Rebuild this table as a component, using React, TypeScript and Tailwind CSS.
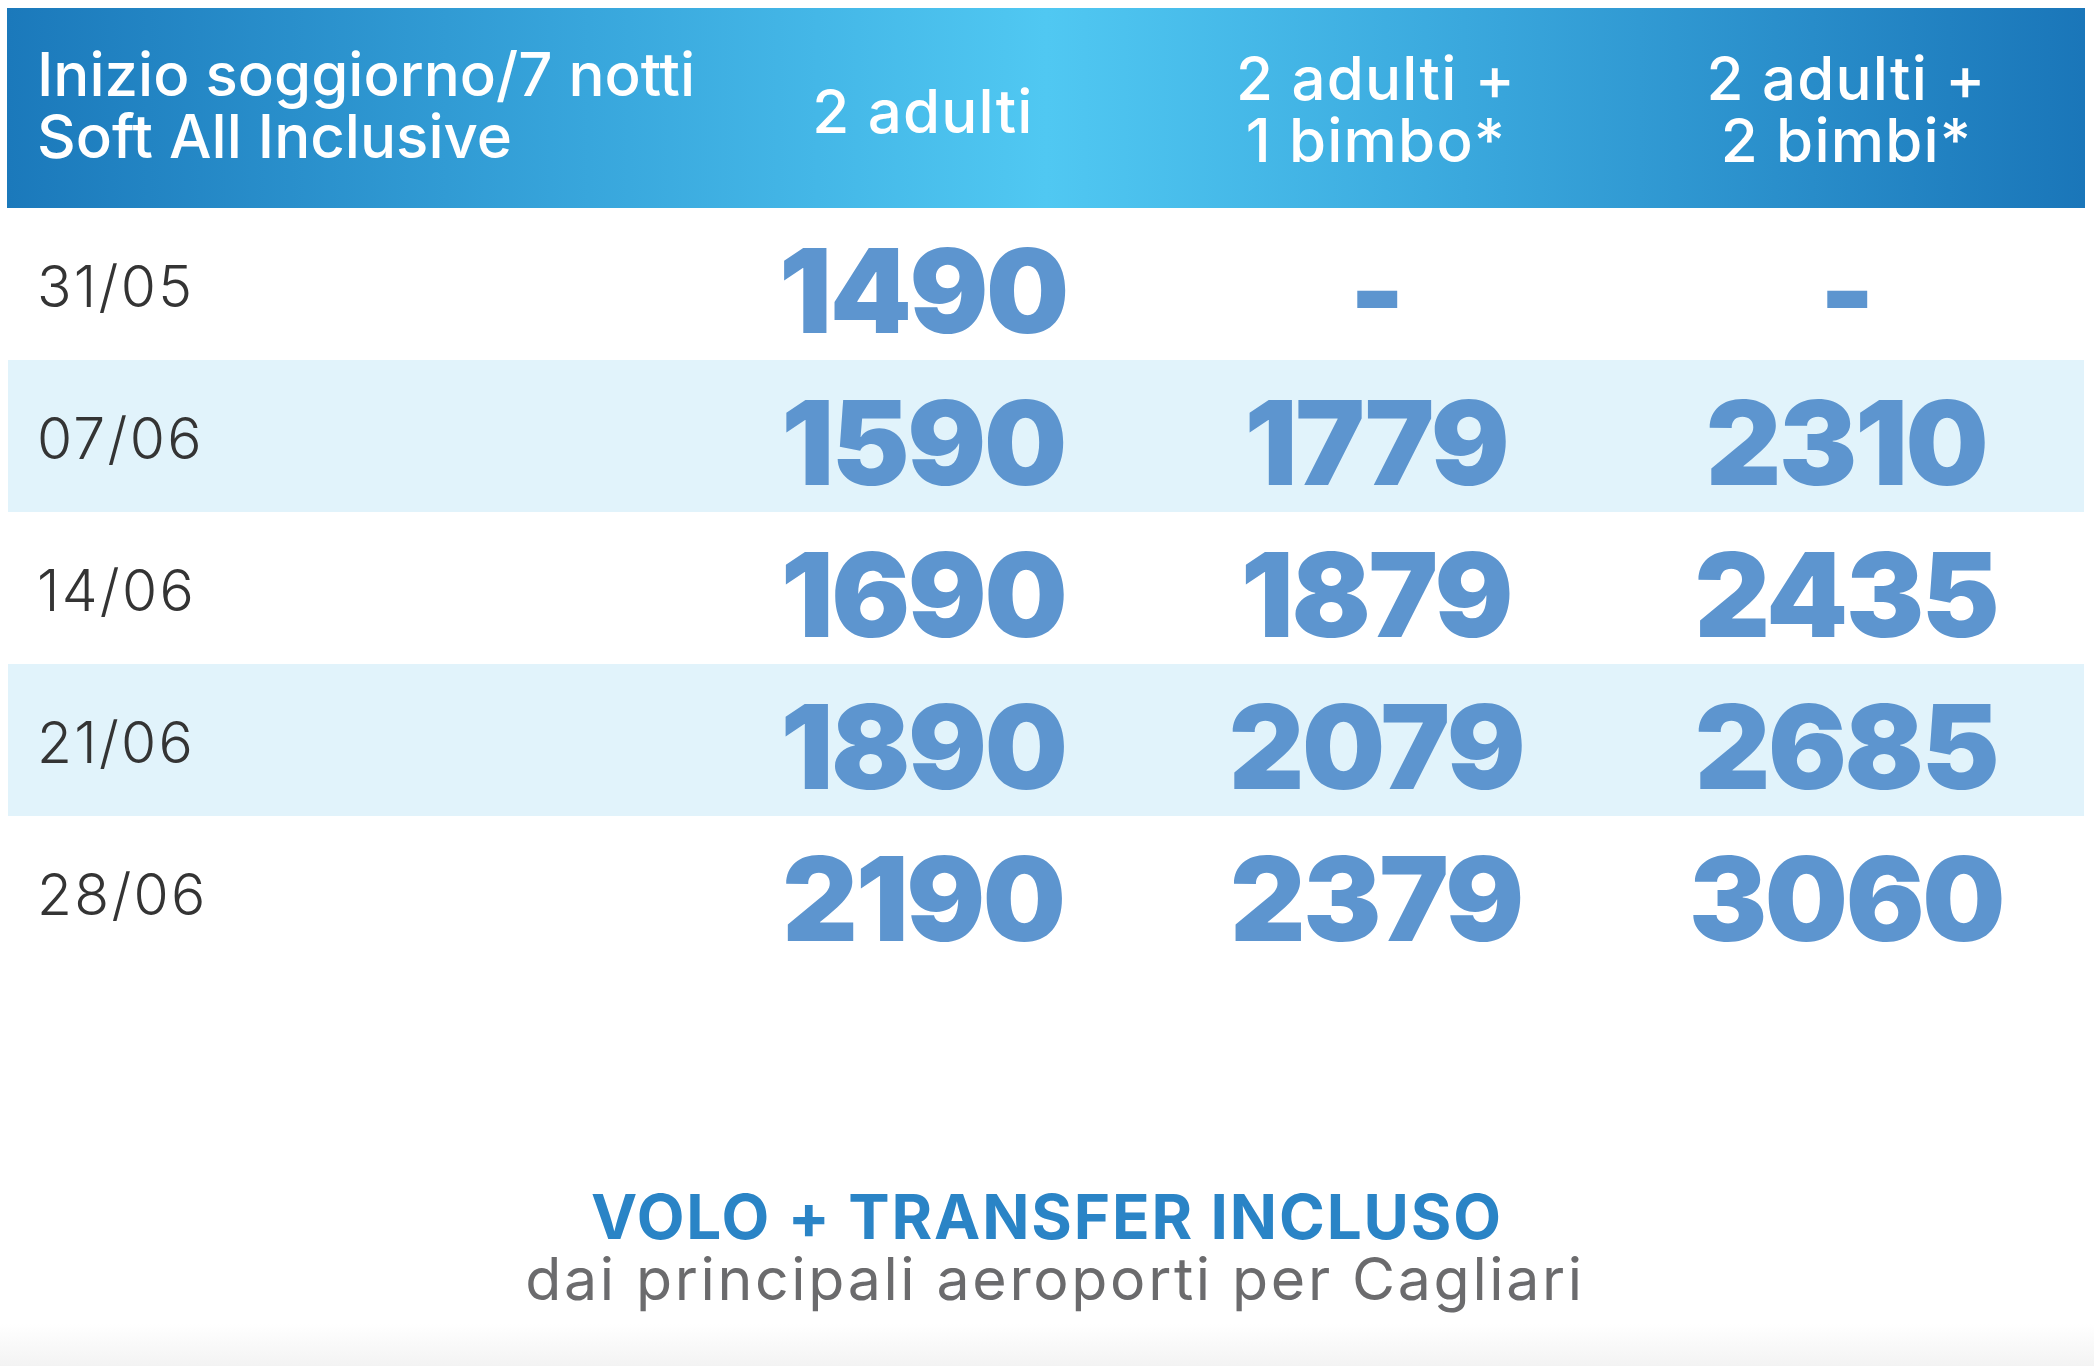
import React from "react";

const rows = [
  { date: "31/05", p: ["1490", "-", "-"] },
  { date: "07/06", p: ["1590", "1779", "2310"] },
  { date: "14/06", p: ["1690", "1879", "2435"] },
  { date: "21/06", p: ["1890", "2079", "2685"] },
  { date: "28/06", p: ["2190", "2379", "3060"] },
];

export default function App() {
  return (
    <div
      className="w-[2094px] h-[1366px] bg-white flex flex-col pt-[8px] overflow-hidden"
      style={{ fontFamily: "Inter, 'Noto Sans', sans-serif" }}
    >
      {/* Header */}
      <div className="ml-[7px] w-[2078px] h-[200px] bg-[linear-gradient(90deg,#1b79bb_0%,#38a6dc_28%,#50c8f2_50%,#38a5db_72%,#1a76b9_100%)] grid grid-cols-[695px_442px_464px_477px] text-white font-medium text-[60px] leading-[62px]">
        <div className="flex items-center pl-[30px] pb-[6px]">
          <p>
            Inizio soggiorno/7 notti
            <br />
            Soft All Inclusive
          </p>
        </div>
        <div className="flex items-center justify-center pt-[6px] tracking-[0.02em]">
          <p>2 adulti</p>
        </div>
        <div className="flex items-center justify-center text-center pt-[2px] tracking-[0.02em]">
          <p>
            2 adulti +
            <br />1 bimbo*
          </p>
        </div>
        <div className="flex items-center justify-center text-center pt-[2px] tracking-[0.02em]">
          <p>
            2 adulti +
            <br />2 bimbi*
          </p>
        </div>
      </div>

      {/* Rows */}
      <div className="ml-[8px] w-[2076px] flex flex-col">
        {rows.map((r, i) => (
          <div
            key={r.date}
            className={
              "h-[152px] grid grid-cols-[694px_442px_464px_476px] " +
              (i % 2 === 1 ? "bg-[#e1f3fb]" : "bg-white")
            }
          >
            <div className="flex items-center pl-[29px] text-[57px] font-light text-[#343434] leading-none tracking-[0.04em] pt-[4px]">
              {r.date}
            </div>
            {r.p.map((v, j) => (
              <div
                key={j}
                className="flex items-center justify-center text-[117px] font-black text-[#5d95cf] leading-none tracking-[-0.02em] pt-[12px]"
              >
                {v}
              </div>
            ))}
          </div>
        ))}
      </div>

      {/* Footer */}
      <div className="flex-1 flex flex-col">
        <div className="mt-[218px] flex flex-col items-center text-center">
          <span className="text-[62px] leading-[62px] font-bold text-[#2a84c6] tracking-[0.03em]">
            VOLO + TRANSFER INCLUSO
          </span>
          <span className="pl-[16px] text-[59px] leading-[62px] font-normal text-[#6b6b6d] tracking-[0.045em]">
            dai principali aeroporti per Cagliari
          </span>
        </div>
        <div className="mt-auto h-[42px] bg-[linear-gradient(180deg,#ffffff_0%,#f3f3f3_100%)]" />
      </div>
    </div>
  );
}
